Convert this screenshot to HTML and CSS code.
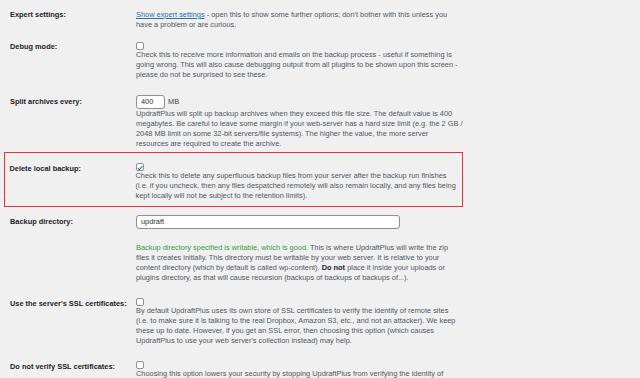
FILE: index.html
```html
<!DOCTYPE html>
<html lang="en">
<head>
    <meta charset="UTF-8">
    <meta name="viewport" content="width=device-width, initial-scale=1.0">
    <title>UpdraftPlus - Advanced settings</title>
    <link rel="stylesheet" href="styles.css">
</head>
<body>
    <div class="settings">
        <div class="row expert">
            <div class="label">Expert settings:</div>
            <div class="field">
                <p class="desc"><a href="#">Show expert settings</a> - open this to show some further options; don't bother with this unless you<br>have a problem or are curious.</p>
            </div>
        </div>
        <div class="row">
            <div class="label">Debug mode:</div>
            <div class="field">
                <span class="checkbox"></span>
                <p class="desc">Check this to receive more information and emails on the backup process - useful if something is<br>going wrong. This will also cause debugging output from all plugins to be shown upon this screen -<br>please do not be surprised to see these.</p>
            </div>
        </div>
        <div class="row">
            <div class="label with-input">Split archives every:</div>
            <div class="field">
                <div class="input-line">
                    <span class="input small">400</span>
                    <span class="unit">MB</span>
                </div>
                <p class="desc">UpdraftPlus will split up backup archives when they exceed this file size. The default value is 400<br>megabytes. Be careful to leave some margin if your web-server has a hard size limit (e.g. the 2 GB /<br>2048 MB limit on some 32-bit servers/file systems). The higher the value, the more server<br>resources are required to create the archive.</p>
            </div>
        </div>
        <div class="row highlight">
            <div class="label low">Delete local backup:</div>
            <div class="field">
                <span class="checkbox checked">
                    <svg viewBox="0 0 10 10" width="8" height="8"><path d="M2.2 5.2 L4.2 7.2 L7.9 2.6" fill="none" stroke="#2271b1" stroke-width="1.4"/></svg>
                </span>
                <p class="desc">Check this to delete any superfluous backup files from your server after the backup run finishes<br>(i.e. if you uncheck, then any files despatched remotely will also remain locally, and any files being<br>kept locally will not be subject to the retention limits).</p>
            </div>
        </div>
        <div class="row">
            <div class="label with-input">Backup directory:</div>
            <div class="field">
                <span class="input wide">updraft</span>
                <p class="desc spaced"><span class="ok">Backup directory specified is writable, which is good.</span> This is where UpdraftPlus will write the zip<br>files it creates initially. This directory must be writable by your web server. It is relative to your<br>content directory (which by default is called wp-content). <b>Do not</b> place it inside your uploads or<br>plugins directory, as that will cause recursion (backups of backups of backups of...).</p>
            </div>
        </div>
        <div class="row">
            <div class="label low">Use the server's SSL certificates:</div>
            <div class="field">
                <span class="checkbox"></span>
                <p class="desc">By default UpdraftPlus uses its own store of SSL certificates to verify the identity of remote sites<br>(i.e. to make sure it is talking to the real Dropbox, Amazon S3, etc., and not an attacker). We keep<br>these up to date. However, if you get an SSL error, then choosing this option (which causes<br>UpdraftPlus to use your web server's collection instead) may help.</p>
            </div>
        </div>
        <div class="row">
            <div class="label low">Do not verify SSL certificates:</div>
            <div class="field">
                <span class="checkbox"></span>
                <p class="desc">Choosing this option lowers your security by stopping UpdraftPlus from verifying the identity of<br>encrypted sites that it connects to (e.g. Dropbox, Google Drive).</p>
            </div>
        </div>
    </div>
</body>
</html>
```

FILE: styles.css
```css
body {
    font-family: "Liberation Sans", Arial, sans-serif;
    font-size: 7.4px;
    line-height: 10px;
    background-color: #f0f0f1;
    color: #50575e;
    margin: 0;
    padding: 2.5px 0 0 0;
    overflow: hidden;
}
.settings {
    margin-left: 4px;
    width: 459px;
}
.row {
    display: grid;
    grid-template-columns: 126px 1fr;
    align-items: start;
    padding: 7.5px 6px;
}
.row.expert {
    padding-bottom: 4.5px;
}
.row.highlight {
    margin-top: -5px;
    border: 1.5px solid #e8333a;
    padding: 10.5px 6px 5px 4.5px;
}
.label {
    color: #1d2327;
    font-weight: bold;
    line-height: 10px;
}
.label.with-input {
    padding-top: 2px;
}
.label.low {
    padding-top: 1px;
}
.desc {
    margin: 0;
    white-space: nowrap;
}
.desc.spaced {
    margin-top: 13.5px;
}
.desc a {
    color: #2271b1;
}
.ok {
    color: #3a9a3f;
}
.desc b {
    color: #1d2327;
}
.checkbox {
    display: block;
    box-sizing: border-box;
    width: 8px;
    height: 8px;
    border: 0.8px solid #8c8f94;
    border-radius: 2px;
    background-color: #ffffff;
    position: relative;
}
.checkbox svg {
    position: absolute;
    left: -0.8px;
    top: -0.8px;
}
.input-line {
    display: flex;
    align-items: center;
    gap: 3px;
}
.input {
    display: block;
    box-sizing: border-box;
    height: 14.3px;
    line-height: 12.3px;
    border: 0.8px solid #8c8f94;
    border-radius: 3px;
    background-color: #ffffff;
    color: #2c3338;
    padding: 0 4px;
}
.input.small {
    width: 29px;
}
.input.wide {
    width: 264px;
}
.unit {
    color: #3c434a;
}
```
